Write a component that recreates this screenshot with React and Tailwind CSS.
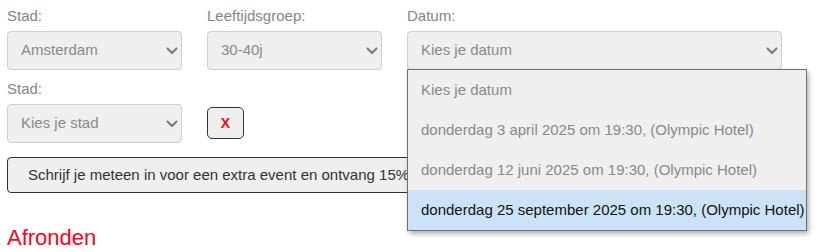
import React from "react";

const Chevron = () => (
  <svg className="pointer-events-none absolute right-[3px] top-1/2 -translate-y-1/2" width="12" height="8" viewBox="0 0 12 8" fill="none">
    <path d="M1.5 1.5 L6 6 L10.5 1.5" stroke="#7a7a7a" strokeWidth="2" strokeLinecap="round" strokeLinejoin="round" />
  </svg>
);

const Select = ({ value, className }) => (
  <div className={`relative h-[39px] rounded-[4px] border border-[#cfcfcf] bg-[#efefef] ${className}`}>
    <div className="flex h-full items-center pl-[13px] text-[15px] text-[#8a8a8a]">{value}</div>
    <Chevron />
  </div>
);

const Field = ({ label, value, width }) => (
  <div className={`flex flex-col ${width}`}>
    <div className="mb-[7px] text-[15px] leading-[17px] text-[#858585]">{label}</div>
    <Select value={value} className="w-full" />
  </div>
);

export default function App() {
  const options = [
    "Kies je datum",
    "donderdag 3 april 2025 om 19:30, (Olympic Hotel)",
    "donderdag 12 juni 2025 om 19:30, (Olympic Hotel)",
    "donderdag 25 september 2025 om 19:30, (Olympic Hotel)",
  ];
  return (
    <div className="relative h-[252px] w-[819px] overflow-hidden bg-white pl-[7px] pt-[7px]" style={{ fontFamily: '"Liberation Sans", Arial, sans-serif' }}>
      <div className="flex gap-[25px]">
        <Field label="Stad:" value="Amsterdam" width="w-[175px]" />
        <Field label="Leeftijdsgroep:" value="30-40j" width="w-[175px]" />
        <div className="relative flex w-[375px] flex-col">
          <div className="mb-[7px] text-[15px] leading-[17px] text-[#858585]">Datum:</div>
          <Select value="Kies je datum" className="w-full" />
          <div className="absolute left-0 top-[62px] z-10 w-[400px] border border-[#6f6f6f] bg-[#efefef] shadow-[2px_3px_5px_rgba(0,0,0,0.3)]">
            {options.map((o, i) => (
              <div
                key={i}
                className={`flex h-[40px] items-center pl-[13px] text-[15px] whitespace-nowrap ${i === 3 ? "bg-[#cce3f7] text-[#111]" : "text-[#8a8a8a]"}`}
              >
                {o}
              </div>
            ))}
          </div>
        </div>
      </div>

      <div className="mt-[10px] flex items-end gap-[25px]">
        <Field label="Stad:" value="Kies je stad" width="w-[175px]" />
        <div className="mb-[4px] flex h-[32px] w-[37px] items-center justify-center rounded-[5px] border border-[#333] bg-[#efefef] text-[14px] font-bold text-[#ff0022]">
          X
        </div>
      </div>

      <div className="mt-[14px] inline-flex h-[36px] items-center whitespace-nowrap rounded-[4px] border border-[#333] bg-[#efefef] px-[20px] text-[15px] text-[#333]">
        Schrijf je meteen in voor een extra event en ontvang 15% korting
      </div>

      <div className="mt-[32px] text-[22px] leading-[26px] text-[#ff0022]">Afronden</div>
    </div>
  );
}
